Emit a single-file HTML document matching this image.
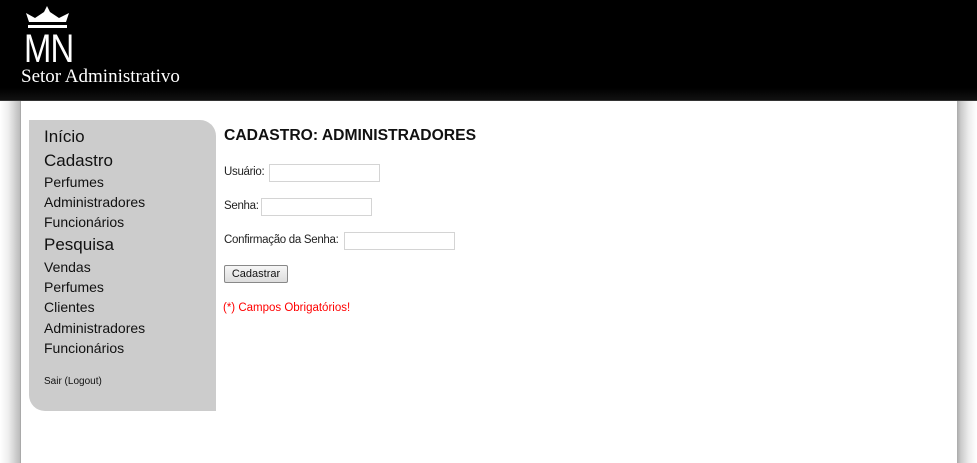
<!DOCTYPE html>
<html><head><meta charset="utf-8"><style>
*{margin:0;padding:0;box-sizing:border-box}
body{width:977px;height:463px;overflow:hidden;background:#fff;font-family:"Liberation Sans",sans-serif;position:relative}
#hdr{position:absolute;left:0;top:0;width:977px;height:101px;background:linear-gradient(#000 0,#000 88%,#111 100%);border-bottom:1px solid #333}
#mn{position:absolute;left:24px;top:27px;color:#fff;font-size:40px;font-family:"Liberation Sans",sans-serif;transform:scaleX(0.82);transform-origin:left;letter-spacing:-1px}
#st{position:absolute;left:21px;top:66px;color:#fff;font-family:"Liberation Serif",serif;font-size:19px}
#ls{position:absolute;left:0;top:101px;width:21px;height:362px;background:linear-gradient(90deg,#fff 0,#eee 40%,#bbb 95%,#999 100%)}
#rs{position:absolute;left:957px;top:101px;width:20px;height:362px;background:linear-gradient(90deg,#aaa 0,#ccc 20%,#eee 60%,#fff 100%)}
#side{position:absolute;left:29px;top:120px;width:187px;height:291px;background:#cccccc;border-radius:0 16px 0 16px;color:#111}
#side div{position:absolute;left:15px;white-space:nowrap}
.b{font-size:17px}
.s{font-size:14px}
h1{position:absolute;left:224px;top:127px;font-size:16px;font-weight:bold;color:#111;white-space:nowrap;transform:scaleX(0.98);transform-origin:left}
.lab{position:absolute;font-size:11.5px;color:#222;white-space:nowrap;letter-spacing:-0.3px}
.inp{position:absolute;height:18px;border:1px solid #d4d4d4;background:#fff}
#btn{position:absolute;left:224px;top:265px;width:64px;height:18px;border:1px solid #888;border-radius:2px;background:linear-gradient(#f6f6f6,#ddd);font-size:11px;text-align:center;line-height:16px;color:#111}
#req{position:absolute;left:223px;top:302px;color:#f00;font-size:11.5px}
</style></head><body>
<div id="hdr">
<svg style="position:absolute;left:25px;top:5px" width="45" height="24" viewBox="0 0 45 24">
<path d="M1 8 L4 17 L41 17 L44 8 L34 13 L25 7 L22 1 L19 7 L10 13 Z" fill="#fff"/>
<rect x="3" y="20" width="39" height="3" fill="#fff"/>
</svg>
<div id="mn">MN</div>
<div id="st">Setor Administrativo</div>
</div>
<div id="ls"></div><div id="rs"></div>
<div id="side">
<div class="b" style="top:7px">Início</div>
<div class="b" style="top:31px">Cadastro</div>
<div class="s" style="top:54px">Perfumes</div>
<div class="s" style="top:74px">Administradores</div>
<div class="s" style="top:94px">Funcionários</div>
<div class="b" style="top:115px">Pesquisa</div>
<div class="s" style="top:139px">Vendas</div>
<div class="s" style="top:159px">Perfumes</div>
<div class="s" style="top:179px">Clientes</div>
<div class="s" style="top:200px">Administradores</div>
<div class="s" style="top:220px">Funcionários</div>
<div style="top:256px;font-size:10px">Sair (Logout)</div>
</div>
<h1>CADASTRO: ADMINISTRADORES</h1>
<div class="lab" style="left:224px;top:166px">Usuário:</div>
<div class="inp" style="left:269px;top:164px;width:111px"></div>
<div class="lab" style="left:224px;top:200px">Senha:</div>
<div class="inp" style="left:261px;top:198px;width:111px"></div>
<div class="lab" style="left:224px;top:234px">Confirmação da Senha:</div>
<div class="inp" style="left:344px;top:232px;width:111px"></div>
<div id="btn">Cadastrar</div>
<div id="req">(*) Campos Obrigatórios!</div>
</body></html>
